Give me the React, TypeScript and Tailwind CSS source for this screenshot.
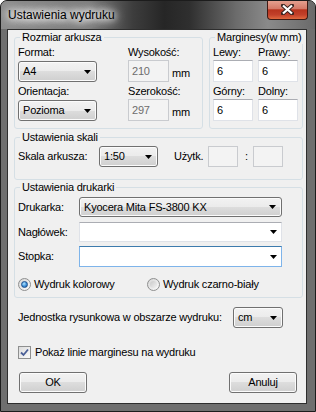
import type { ReactNode } from "react";

type BoxProps = {
  className?: string;
  children?: ReactNode;
};

function Arrow() {
  return (
    <svg width="7" height="4" viewBox="0 0 7 4" className="shrink-0">
      <polygon points="0,0 7,0 3.5,4" fill="#000" />
    </svg>
  );
}

function DropList({ value, className = "" }: { value: string; className?: string }) {
  return (
    <div
      className={`flex items-center justify-between rounded-[3px] border border-[#707070] bg-[linear-gradient(#f2f2f2_0%,#ebebeb_50%,#dddddd_50%,#cfcfcf_100%)] pl-[4px] pr-[5px] leading-[13px] shadow-[inset_0_0_0_1px_#fbfbfb] ${className}`}
    >
      <span>{value}</span>
      <Arrow />
    </div>
  );
}

function EditCombo({ focused = false, className = "" }: { focused?: boolean; className?: string }) {
  return (
    <div
      className={`flex items-center justify-end border bg-white pr-[4px] ${
        focused
          ? "border-[#7eb4ea] border-t-[#3d7bad]"
          : "border-[#dfe2e8] border-t-[#abadb3]"
      } ${className}`}
    >
      <Arrow />
    </div>
  );
}

function TextBox({
  value,
  disabled = false,
  className = "",
}: {
  value?: string;
  disabled?: boolean;
  className?: string;
}) {
  return (
    <div
      className={`flex items-center border pl-[3px] leading-[13px] ${
        disabled
          ? "border-[#c9cbcf] bg-[#f3f3f3] text-[#6d6d6d]"
          : "border-[#dfe2e8] border-t-[#abadb3] bg-white"
      } ${className}`}
    >
      {value}
    </div>
  );
}

function Group({ title, className = "", children }: BoxProps & { title: string }) {
  return (
    <fieldset className={`min-w-0 rounded-[3px] border border-[#d5dfe5] pl-[3px] ${className}`}>
      <legend className="ml-[2px] whitespace-nowrap px-[2px] leading-[13px]">{title}</legend>
      {children}
    </fieldset>
  );
}

function Radio({ checked, label, className = "" }: { checked: boolean; label: string; className?: string }) {
  return (
    <div className={`flex items-center gap-[3px] ${className}`}>
      <span className="flex h-[13px] w-[13px] items-center justify-center rounded-full border border-[#8e8f8f] bg-[linear-gradient(135deg,#d6d6d6,#fbfbfb)]">
        {checked ? (
          <span className="h-[7px] w-[7px] rounded-full border border-[#1c4f8d] bg-[radial-gradient(circle_at_40%_35%,#b4e6ff_0%,#3c8fd8_55%,#1d5aa0_100%)]" />
        ) : (
          <span className="h-[7px] w-[7px] rounded-full bg-[linear-gradient(135deg,#c9c9c9,#f2f2f2)]" />
        )}
      </span>
      <span className="leading-[13px]">{label}</span>
    </div>
  );
}

function Button({ label, className = "" }: { label: string; className?: string }) {
  return (
    <div
      className={`flex h-[21px] w-[68px] items-center justify-center rounded-[3px] border border-[#707070] bg-[linear-gradient(#f2f2f2_0%,#ebebeb_50%,#dddddd_50%,#cfcfcf_100%)] leading-[13px] shadow-[inset_0_0_0_1px_#fbfbfb] ${className}`}
    >
      {label}
    </div>
  );
}

export default function App() {
  return (
    <div className="h-[412px] w-[316px] bg-white font-['Liberation_Sans',Arial,sans-serif] text-[11px] tracking-[-0.2px] text-black">
      <div className="flex h-full w-full flex-col overflow-hidden rounded-t-[7px] border border-[#1c1c1c] bg-[#6f6f6f]">
        {/* title bar */}
        <div className="flex h-[28px] shrink-0 justify-between bg-[linear-gradient(90deg,#8e8e8e_0%,#7c7c7c_28%,#3d3d3d_42%,#262626_52%,#2f2f2f_60%,#6c6c6c_75%,#8a8a8a_85%,#6a6a6a_100%)]">
          <span className="self-center pl-[7px] text-[12px] tracking-normal text-black [text-shadow:0_0_6px_#fff,0_0_8px_#fff,0_0_12px_#fff,0_0_14px_#fff]">
            Ustawienia wydruku
          </span>
          <div className="-mt-[1px] mr-[7px] flex h-[20px] w-[41px] items-center justify-center rounded-b-[4px] border border-t-0 border-[#3e1a14] bg-[linear-gradient(#e7a594_0%,#d57a68_45%,#b8341e_52%,#c2402a_78%,#e0693f_100%)]">
            <svg width="13" height="11" viewBox="0 0 13 11">
              <path d="M2 1.5 L11 9.5 M11 1.5 L2 9.5" stroke="#3a2420" strokeWidth="4" strokeLinecap="square" />
              <path d="M2 1.5 L11 9.5 M11 1.5 L2 9.5" stroke="#fff" strokeWidth="2.2" />
            </svg>
          </div>
        </div>

        {/* client area */}
        <div className="ml-[6px] h-[375px] w-[300px] shrink-0 border border-[#2e2e2e] bg-[#f0f0f0] pl-[6px]">
          <div className="mt-[1px] flex gap-[6px]">
            <Group title="Rozmiar arkusza" className="w-[189px] pb-[7px]">
              <div className="flex">
                <div className="flex w-[79px] flex-col">
                  <span className="mt-[2px] leading-[13px]">Format:</span>
                  <DropList value="A4" className="mt-[2px] h-[21px] w-[79px]" />
                  <span className="mt-[3px] leading-[13px]">Orientacja:</span>
                  <DropList value="Pozioma" className="mt-[2px] h-[21px] w-[79px]" />
                </div>
                <div className="ml-[31px] flex flex-col">
                  <span className="mt-[2px] leading-[13px]">Wysokość:</span>
                  <div className="mt-[1px] flex items-center">
                    <TextBox value="210" disabled className="h-[22px] w-[41px]" />
                    <span className="ml-[3px] mt-[4px]">mm</span>
                  </div>
                  <span className="mt-[3px] leading-[13px]">Szerokość:</span>
                  <div className="mt-[1px] flex items-center">
                    <TextBox value="297" disabled className="h-[22px] w-[41px]" />
                    <span className="ml-[3px] mt-[4px]">mm</span>
                  </div>
                </div>
              </div>
            </Group>

            <Group title="Marginesy(w mm)" className="w-[94px] pb-[7px]">
              <div className="grid grid-cols-[40px_40px] gap-x-[5px]">
                <span className="mt-[2px] leading-[13px]">Lewy:</span>
                <span className="mt-[2px] leading-[13px]">Prawy:</span>
                <TextBox value="6" className="mt-[1px] h-[22px]" />
                <TextBox value="6" className="mt-[1px] h-[22px]" />
                <span className="mt-[3px] leading-[13px]">Górny:</span>
                <span className="mt-[3px] leading-[13px]">Dolny:</span>
                <TextBox value="6" className="mt-[1px] h-[22px]" />
                <TextBox value="6" className="mt-[1px] h-[22px]" />
              </div>
            </Group>
          </div>

          <Group title="Ustawienia skali" className="mt-[2px] w-[289px] pb-[12px]">
            <div className="mt-[2px] flex h-[21px] items-center">
              <span className="w-[81px]">Skala arkusza:</span>
              <DropList value="1:50" className="h-[21px] w-[59px]" />
              <span className="ml-[16px] w-[34px]">Użytk.</span>
              <TextBox disabled className="h-[21px] w-[30px]" />
              <span className="ml-[7px] w-[8px]">:</span>
              <TextBox disabled className="h-[21px] w-[30px]" />
            </div>
          </Group>

          <Group title="Ustawienia drukarki" className="mt-[1px] w-[289px] pb-[6px]">
            <div className="mt-[3px] flex h-[20px] items-center">
              <span className="w-[61px]">Drukarka:</span>
              <DropList value="Kyocera Mita FS-3800 KX" className="h-[20px] w-[203px]" />
            </div>
            <div className="mt-[5px] flex h-[20px] items-center">
              <span className="w-[61px]">Nagłówek:</span>
              <EditCombo className="h-[20px] w-[203px]" />
            </div>
            <div className="mt-[4px] flex h-[21px] items-center">
              <span className="w-[61px]">Stopka:</span>
              <EditCombo focused className="h-[21px] w-[203px]" />
            </div>
            <div className="mt-[11px] flex h-[13px] items-center">
              <Radio checked label="Wydruk kolorowy" className="w-[129px]" />
              <Radio checked={false} label="Wydruk czarno-biały" />
            </div>
          </Group>

          <div className="mt-[9px] flex h-[21px] items-center pl-[4px]">
            <span className="w-[215px]">Jednostka rysunkowa w obszarze wydruku:</span>
            <DropList value="cm" className="h-[21px] w-[50px]" />
          </div>

          <div className="mt-[18px] flex h-[13px] items-center pl-[4px]">
            <span className="flex h-[13px] w-[13px] items-center justify-center border border-[#8e8f8f] bg-[linear-gradient(135deg,#dcdcdc,#fbfbfb)]">
              <svg width="9" height="9" viewBox="0 0 9 9">
                <path d="M1 4.5 L3.5 7 L8 1.5" fill="none" stroke="#4a5f97" strokeWidth="1.8" />
              </svg>
            </span>
            <span className="ml-[4px] leading-[13px]">Pokaż linie marginesu na wydruku</span>
          </div>

          <div className="mt-[13px] flex w-[289px] justify-between">
            <Button label="OK" className="ml-[5px]" />
            <Button label="Anuluj" className="mr-[6px]" />
          </div>
        </div>
      </div>
    </div>
  );
}
